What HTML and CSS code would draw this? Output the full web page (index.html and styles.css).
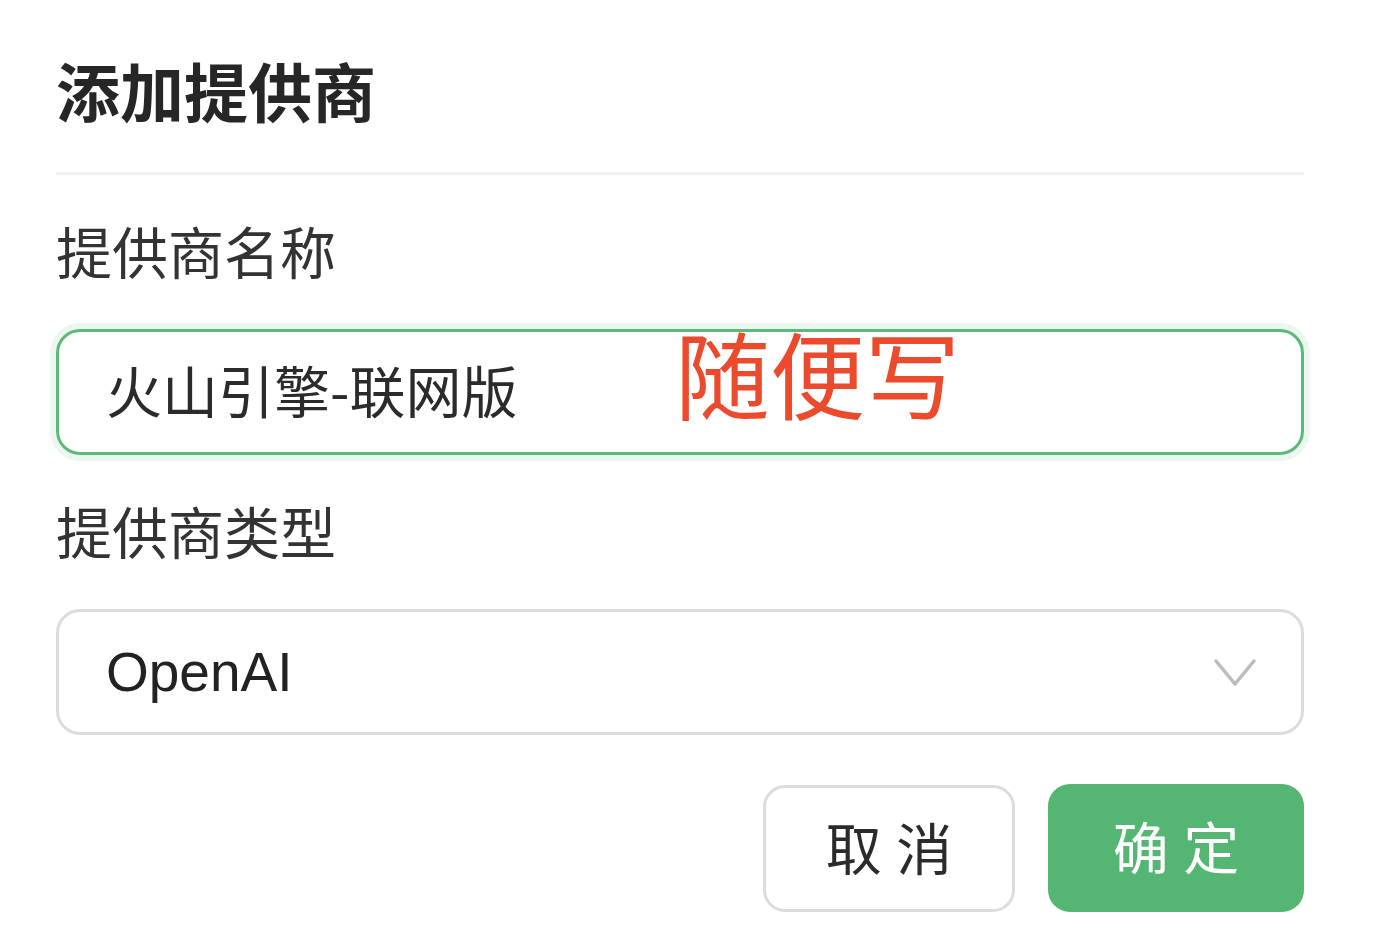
FILE: index.html
```html
<!DOCTYPE html>
<html lang="zh-CN">
<head>
<meta charset="utf-8">
<title>添加提供商</title>
<link rel="stylesheet" href="styles.css">
</head>
<body>
<div class="dialog">
  <h1 class="title">添加提供商</h1>
  <div class="field">
    <label class="label">提供商名称</label>
    <div class="input focused">
      <span class="value">火山引擎-联网版</span>
      <span class="note">随便写</span>
    </div>
  </div>
  <div class="field">
    <label class="label">提供商类型</label>
    <div class="input select">
      <span class="value latin">OpenAI</span>
      <svg class="chevron" width="44" height="32" viewBox="0 0 44 32"><polyline points="3,4 22,27 41,4" fill="none" stroke="#bcbcbc" stroke-width="3.5" stroke-linecap="round" stroke-linejoin="round"/></svg>
    </div>
  </div>
  <div class="actions">
    <button class="btn cancel">取 消</button>
    <button class="btn ok">确 定</button>
  </div>
</div>
</body>
</html>
```
FILE: styles.css
```css
html, body {
  margin: 0;
  padding: 0;
  background: #fff;
}
body {
  font-family: "Noto Sans CJK SC", "Noto Sans", sans-serif;
  color: #333;
}
.dialog {
  width: 1248px;
  padding: 54px 0 0 56px;
  display: flex;
  flex-direction: column;
}
.title {
  margin: 0;
  font-size: 64px;
  line-height: 70px;
  font-weight: 700;
  color: #262626;
  padding-bottom: 48px;
  border-bottom: 3px solid #efefef;
}
.field {
  display: flex;
  flex-direction: column;
}
.label {
  font-size: 56px;
  line-height: 60px;
  color: #333;
  margin-top: 45px;
  margin-bottom: 49px;
}
.input {
  position: relative;
  box-sizing: border-box;
  height: 126px;
  border: 3px solid #dcdcdc;
  border-radius: 24px;
  display: flex;
  align-items: center;
  padding-left: 47px;
  padding-right: 44px;
}
.input.focused {
  border-color: #5db87b;
  box-shadow: 0 0 0 6px #eaf6ee;
}
.value {
  font-size: 56px;
  line-height: 60px;
  color: #2b2b2b;
  margin-bottom: 6px;
}
.latin {
  font-family: "Liberation Sans", Arial, sans-serif;
  font-size: 55px;
  color: #222;
  margin-bottom: 0;
}
.note {
  position: absolute;
  left: 616px;
  top: -20px;
  font-size: 95px;
  line-height: 120px;
  color: #ec4a2c;
}
.select {
  justify-content: space-between;
}
.chevron {
  display: block;
  margin-top: 2px;
}
.actions {
  display: flex;
  justify-content: flex-end;
  gap: 33px;
  margin-top: 49px;
}
.btn {
  box-sizing: border-box;
  height: 127px;
  border-radius: 22px;
  font-family: "Noto Sans CJK SC", sans-serif;
  font-size: 56px;
  line-height: 60px;
  padding: 0 0 6px 0;
  letter-spacing: 1px;
  text-indent: 1px;
}
.cancel {
  width: 252px;
  background: #fff;
  border: 3px solid #dcdcdc;
  color: #2b2b2b;
  margin-top: 1px;
}
.ok {
  width: 256px;
  height: 128px;
  background: #55b673;
  border: none;
  color: #fff;
}
```
